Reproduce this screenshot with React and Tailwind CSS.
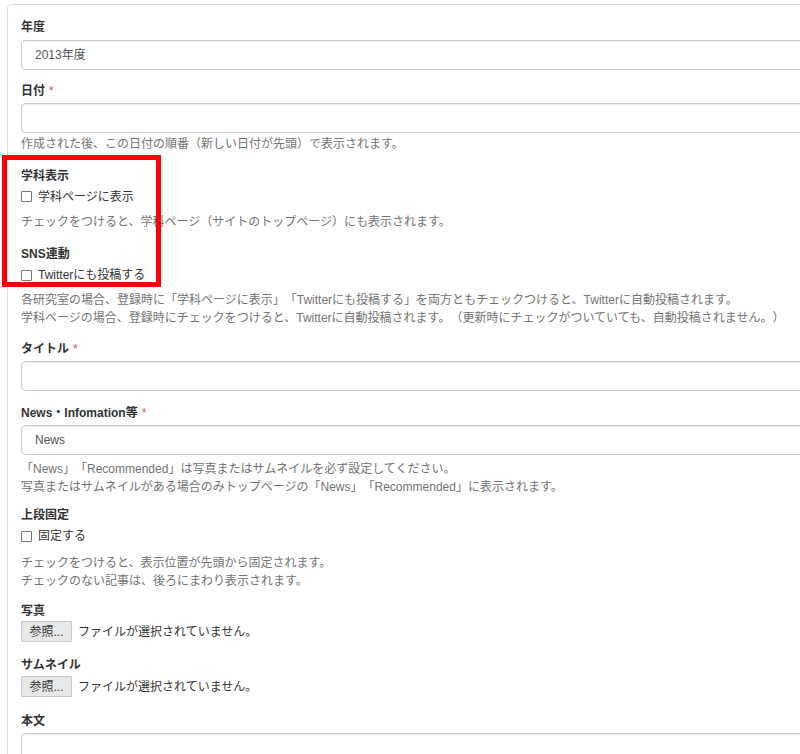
import React from 'react';

const font = { fontFamily: '"Liberation Sans", "Noto Sans CJK JP", sans-serif' };

const Label = ({ children, required, className = '' }) => (
  <div className={`text-[12px] leading-[18px] font-bold text-[#333] ${className}`}>
    {children}
    {required && <span className="ml-[4px] font-normal text-[#d9534f]">*</span>}
  </div>
);

const Input = ({ value, className = '' }) => (
  <div className={`h-[30px] w-full flex items-center px-[13px] border border-[#ccc] rounded-[4px] bg-white shadow-[inset_0_1px_1px_rgba(0,0,0,0.075)] text-[12px] text-[#555] ${className}`}>
    {value}
  </div>
);

const Help = ({ lines, className = '' }) => (
  <div className={`text-[12px] leading-[17.5px] text-[#737373] ${className}`}>
    {lines.map((l) => (
      <div key={l}>{l}</div>
    ))}
  </div>
);

const Check = ({ label, className = '' }) => (
  <div className={`flex items-center h-[18px] text-[12px] text-[#333] ${className}`}>
    <span className="w-[11px] h-[11px] border border-[#767676] bg-white rounded-[1px] mr-[6px]" />
    {label}
  </div>
);

const FileInput = ({ className = '' }) => (
  <div className={`flex items-center text-[12px] text-[#333] ${className}`}>
    <span className="h-[21px] w-[51px] flex items-center justify-center border border-[#c8c8c8] bg-[#e8e8e8] rounded-[1px]">
      参照...
    </span>
    <span className="ml-[6px]">ファイルが選択されていません。</span>
  </div>
);

export default function App() {
  return (
    <div className="relative w-[800px] h-[754px] overflow-hidden bg-white [text-spacing-trim:space-all]" style={font}>
      <div className="ml-[7px] mt-[4px] w-[830px] h-[800px] border border-[#ddd] rounded-[4px] pl-[13px] pr-[20px] pt-[13px]">
        {/* 年度 */}
        <Label className="mb-[4px]">年度</Label>
        <Input value="2013年度" />

        {/* 日付 */}
        <Label required className="mt-[12px] mb-[3px]">日付</Label>
        <Input />
        <Help className="mt-[3px]" lines={['作成された後、この日付の順番（新しい日付が先頭）で表示されます。']} />

        {/* 学科表示 */}
        <Label className="mt-[13px]">学科表示</Label>
        <Check className="mt-[3px]" label="学科ページに表示" />
        <Help className="mt-[8px]" lines={['チェックをつけると、学科ページ（サイトのトップページ）にも表示されます。']} />

        {/* SNS連動 */}
        <Label className="mt-[14px]">SNS連動</Label>
        <Check className="mt-[3px]" label="Twitterにも投稿する" />
        <Help
          className="mt-[8px]"
          lines={[
            '各研究室の場合、登録時に「学科ページに表示」「Twitterにも投稿する」を両方ともチェックつけると、Twitterに自動投稿されます。',
            '学科ページの場合、登録時にチェックをつけると、Twitterに自動投稿されます。（更新時にチェックがついていても、自動投稿されません。）',
          ]}
        />

        {/* タイトル */}
        <Label required className="mt-[13px] mb-[3px]">タイトル</Label>
        <Input />

        {/* News */}
        <Label required className="mt-[13px] mb-[3px]">News・Infomation等</Label>
        <Input value="News" />
        <Help
          className="mt-[6px]"
          lines={[
            '「News」「Recommended」は写真またはサムネイルを必ず設定してください。',
            '写真またはサムネイルがある場合のみトップページの「News」「Recommended」に表示されます。',
          ]}
        />

        {/* 上段固定 */}
        <Label className="mt-[10px]">上段固定</Label>
        <Check className="mt-[3px]" label="固定する" />
        <Help
          className="mt-[10px]"
          lines={['チェックをつけると、表示位置が先頭から固定されます。', 'チェックのない記事は、後ろにまわり表示されます。']}
        />

        {/* 写真 */}
        <Label className="mt-[12px] mb-[1px]">写真</Label>
        <FileInput />

        {/* サムネイル */}
        <Label className="mt-[14px] mb-[2px]">サムネイル</Label>
        <FileInput />

        {/* 本文 */}
        <Label className="mt-[15px] mb-[3px]">本文</Label>
        <div className="h-[120px] w-full border border-[#ccc] rounded-[4px] shadow-[inset_0_1px_1px_rgba(0,0,0,0.075)]" />
      </div>

      {/* annotation */}
      <div className="absolute left-[2px] top-[155px] w-[159px] h-[132px] border-[5px] border-[#f00]" />
    </div>
  );
}
